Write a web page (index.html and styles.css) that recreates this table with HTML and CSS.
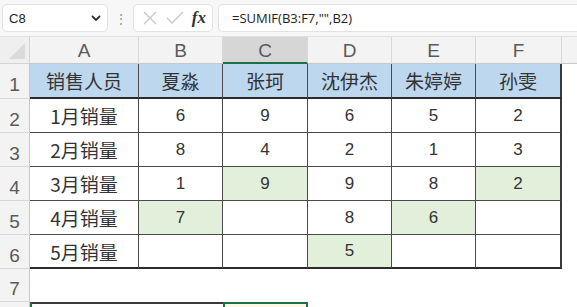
FILE: index.html
```html
<!DOCTYPE html>
<html>
<head>
<meta charset="utf-8">
<link rel="stylesheet" href="styles.css">
</head>
<body>
<div class="app">
  <div class="toolbar">
    <div class="namebox"><span>C8</span>
      <svg class="chev" width="10" height="7" viewBox="0 0 10 7"><path d="M1.5 1.5 L5 5 L8.5 1.5" fill="none" stroke="#333" stroke-width="1.8" stroke-linecap="round"/></svg>
    </div>
    <div class="dots">⋮</div>
    <div class="fxbox">
      <svg width="16" height="16" viewBox="0 0 16 16"><path d="M2 2 L14 14 M14 2 L2 14" stroke="#c8c8c8" stroke-width="1.4"/></svg>
      <svg width="18" height="16" viewBox="0 0 18 16"><path d="M1 8 L6 13 L17 2" fill="none" stroke="#c8c8c8" stroke-width="1.4"/></svg>
      <span class="fx">fx</span>
    </div>
    <div class="formula">=SUMIF(B3:F7,"",B2)</div>
  </div>
  <div class="sheet">
    <div class="corner"><div class="tri"></div></div>
    <div class="ch">A</div><div class="ch">B</div><div class="ch sel">C</div><div class="ch">D</div><div class="ch">E</div><div class="ch">F</div><div class="ch last"></div>

    <div class="rh">1</div>
    <div class="c hd">销售人员</div><div class="c hd">夏淼</div><div class="c hd">张珂</div><div class="c hd">沈伊杰</div><div class="c hd">朱婷婷</div><div class="c hd r">孙雯</div><div class="g"></div>

    <div class="rh">2</div>
    <div class="c lbl">1月销量</div><div class="c">6</div><div class="c">9</div><div class="c">6</div><div class="c">5</div><div class="c r">2</div><div class="g"></div>

    <div class="rh">3</div>
    <div class="c lbl">2月销量</div><div class="c">8</div><div class="c">4</div><div class="c">2</div><div class="c">1</div><div class="c r">3</div><div class="g"></div>

    <div class="rh">4</div>
    <div class="c lbl">3月销量</div><div class="c">1</div><div class="c hl">9</div><div class="c">9</div><div class="c">8</div><div class="c hl r">2</div><div class="g"></div>

    <div class="rh">5</div>
    <div class="c lbl">4月销量</div><div class="c hl">7</div><div class="c"></div><div class="c">8</div><div class="c hl">6</div><div class="c r"></div><div class="g"></div>

    <div class="rh">6</div>
    <div class="c lbl b">5月销量</div><div class="c b"></div><div class="c b"></div><div class="c b hl">5</div><div class="c b"></div><div class="c b r"></div><div class="g"></div>

    <div class="rh">7</div>
    <div class="blank"></div>

    <div class="rh"></div>
    <div class="merged"></div><div class="active"></div><div class="rest"></div>
  </div>
</div>
</body>
</html>
```
FILE: styles.css
```css
* { box-sizing: border-box; }
html, body { margin: 0; padding: 0; background: #ffffff; }
body { width: 577px; height: 307px; overflow: hidden; font-family: "Noto Sans CJK SC", "Liberation Sans", sans-serif; }
.app { display: flex; flex-direction: column; height: 307px; }
.toolbar {
  height: 37px; flex: none; display: flex; align-items: center;
  background: #f7f7f7; border-bottom: 1px solid #e1e1e1; padding: 0 0 0 2px;
}
.namebox {
  width: 106px; height: 28px; background: #fff; border: 1px solid #e2e2e2; border-radius: 5px;
  display: flex; align-items: center; justify-content: space-between; padding: 0 6px 0 6px;
  font-family: "Liberation Sans", sans-serif; font-size: 13px; color: #222;
}
.chev { margin-top: 1px; }
.dots { width: 25px; text-align: center; color: #9a9a9a; font-size: 14px; }
.fxbox {
  width: 80px; height: 28px; background: #fff; border: 1px solid #e2e2e2; border-radius: 5px;
  display: flex; align-items: center; justify-content: space-between; padding: 0 6px 0 8px;
}
.fx { font-family: "Liberation Serif", serif; font-style: italic; font-weight: bold; font-size: 17px; color: #333; }
.formula {
  flex: 1; height: 28px; margin-left: 5px; background: #fff; border: 1px solid #e2e2e2; border-right: none;
  border-radius: 5px 0 0 5px; display: flex; align-items: center; padding-left: 13px;
  font-family: "Open Sans", "Liberation Sans", sans-serif; font-size: 13px; color: #222;
}
.sheet {
  flex: 1; display: grid;
  grid-template-columns: 30px 109px 84px 85px 84px 84px 86px 1fr;
  grid-template-rows: 27px 35px 34px 34px 34px 34px 34px 33px 1fr;
}
.corner { background: #efefef; border-right: 1px solid #d4d4d4; border-bottom: 1px solid #d4d4d4; position: relative; }
.tri { position: absolute; right: 4px; bottom: 4px; width: 0; height: 0; border-left: 16px solid transparent; border-bottom: 16px solid #dadada; }
.ch {
  background: #f3f3f3; border-right: 1px solid #d8d8d8; border-bottom: 1px solid #c8c8c8;
  display: flex; align-items: center; justify-content: center; padding-top: 2px;
  font-family: "Liberation Sans", sans-serif; font-size: 19px; color: #5a5a5a;
}
.ch.sel { background: #d6d6d6; border-bottom: 2px solid #1e7145; }
.ch.last { border-right: none; }
.rh {
  background: #f3f3f3; border-right: 1px solid #c8c8c8; border-bottom: 1px solid #d8d8d8;
  display: flex; align-items: center; justify-content: center; padding-top: 8px;
  font-family: "Liberation Sans", sans-serif; font-size: 19px; color: #5a5a5a;
}
.c {
  border-right: 1px solid #4a4a4a; border-bottom: 1px solid #4a4a4a;
  display: flex; align-items: center; justify-content: center;
  font-family: "Liberation Sans", "Noto Sans CJK SC", sans-serif; font-size: 17px; color: #333;
}
.c.hd, .c.lbl { font-family: "Noto Sans CJK SC", sans-serif; font-size: 19px; color: #333; }
.c.hd { background: #bdd7ee; border-bottom: 2px solid #2b2b2b; }
.c.hl { background: #e2efda; }
.c.b { border-bottom: 2px solid #2b2b2b; }
.c.r { border-right: 2px solid #3a3a3a; }
.g { background: #fff; }
.blank { grid-column: 2 / 9; }
.merged { grid-column: 2 / 4; border-top: 2px solid #3a3a3a; position: relative; }
.merged::before { content: ""; position: absolute; left: 0; top: -2px; width: 2px; height: 8px; background: #1e7145; }
.active { background: #fdf8e6; border: 2px solid #1e7145; }
.rest { grid-column: 5 / 9; background: #fff; }
```
